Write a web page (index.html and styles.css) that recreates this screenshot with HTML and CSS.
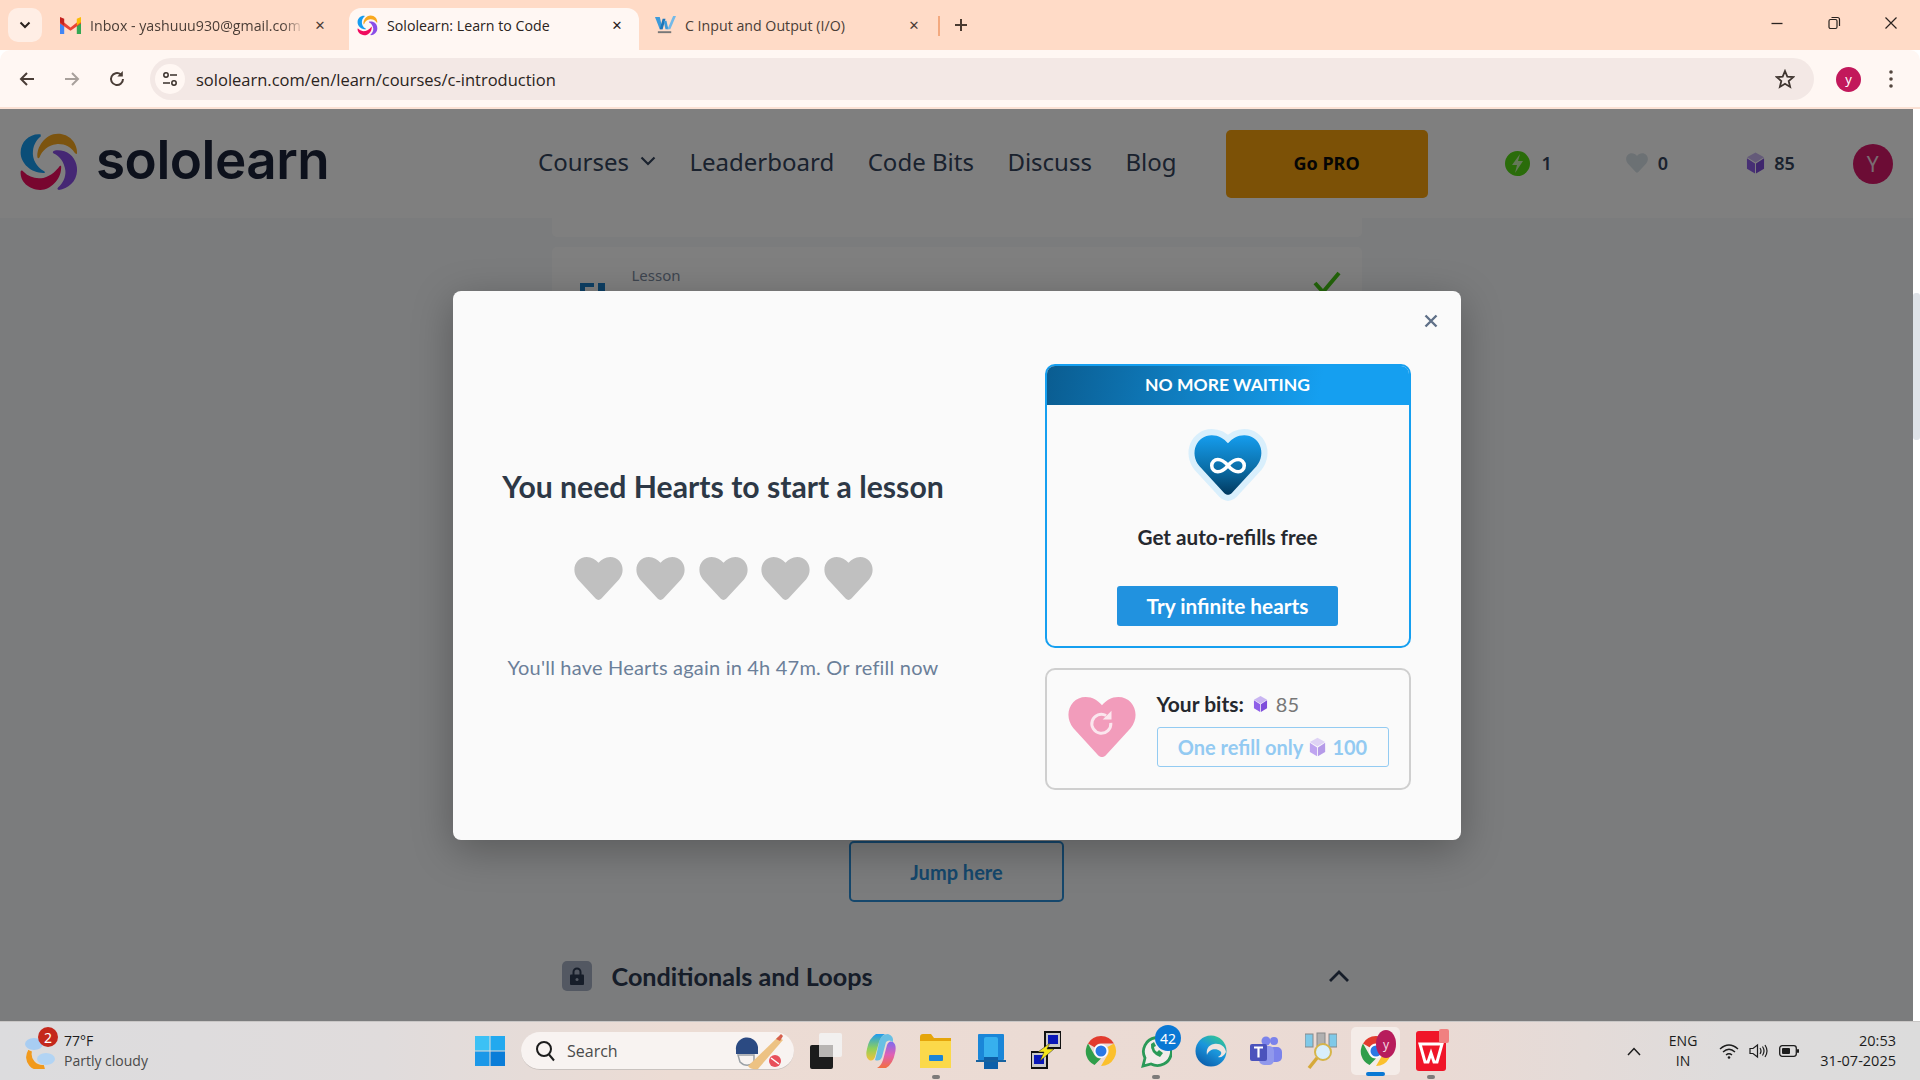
FILE: index.html
```html
<!DOCTYPE html>
<html lang="en">
<head>
<meta charset="utf-8">
<title>Sololearn: Learn to Code</title>
<link rel="stylesheet" href="styles.css">
</head>
<body>
<svg class="defs" width="0" height="0" aria-hidden="true">
  <symbol id="swirl" viewBox="25 38 185 182">
    <path class="sw-a" d="M92 44C60 40 30 65 30 100C30 135 65 165 104 163C106 160 104 158 100 156C80 145 65 120 68 95C70 72 82 58 92 50Z"/>
    <path class="sw-b" d="M82 115C78 85 105 42 145 42C180 42 205 70 204 103C202 106 199 104 196 100C185 82 165 72 140 74C115 76 95 95 88 115C86 118 83 118 82 115Z"/>
    <path class="sw-c" d="M30 158C32 153 36 155 40 160C55 175 75 182 100 178C125 172 140 155 150 142C153 139 156 141 155 146C155 185 120 216 90 215C55 213 28 190 30 158Z"/>
    <path class="sw-d" d="M130 97C135 92 150 92 165 96C190 104 205 130 204 155C203 190 175 212 148 215C143 215 142 211 146 207C160 195 170 175 168 155C165 130 150 110 132 103C129 101 129 99 130 97Z"/>
  </symbol>
  <symbol id="heart" viewBox="0 0 50 44">
    <path d="M25 44C24 44 23 43.500 22 42.500L4 23C-4 13 2 0 13 0C18 0 22 2.500 25 6C28 2.500 32 0 37 0C48 0 54 13 46 23L28 42.500C27 43.500 26 44 25 44Z"/>
  </symbol>
  <symbol id="cube" viewBox="0 0 20 22">
    <path class="cube-top" d="M10 0L19 5L10 10.500L1 5Z"/>
    <path class="cube-left" d="M1 6L9.500 11.500V22L1 17Z"/>
    <path class="cube-right" d="M19 6L10.500 11.500V22L19 17Z"/>
  </symbol>
  <symbol id="chrome" viewBox="0 0 32 32">
    <path fill="#e23b2e" d="M16 1A15 15 0 0 1 29 8.500H16A7.500 7.500 0 0 0 9.500 12.300L3 8.500A15 15 0 0 1 16 1Z"/>
    <path fill="#2f9e4a" d="M3 8.500L9.500 20A7.500 7.500 0 0 0 16 23.500L9.500 30A15 15 0 0 1 3 8.500Z"/>
    <path fill="#fbc02d" d="M29 8.500A15 15 0 0 1 16 31L22.500 20A7.500 7.500 0 0 0 22.500 12Z"/>
    <circle cx="16" cy="16" r="7" fill="#fff"/>
    <circle cx="16" cy="16" r="5.500" fill="#2b78e4"/>
  </symbol>
</svg>

<header class="tabstrip">
  <button class="tab-search"><svg width="12" height="8" viewBox="0 0 12 8"><path d="M1.500 1.500L6 6L10.500 1.500" fill="none" stroke="#2a211d" stroke-width="2"/></svg></button>
  <div class="tab tab-first">
    <svg class="fav" viewBox="0 0 20 16"><path fill="#4285f4" d="M0 3V16H4V7Z"/><path fill="#34a853" d="M20 3V16H16V7Z"/><path fill="#ea4335" d="M0 2L10 10L20 2V6L10 13L0 6Z"/><path fill="#fbbc04" d="M16 1.500L20 0V5L16 8Z"/><path fill="#c5221f" d="M4 1.500L0 0V5L4 8Z"/></svg>
    <span class="tab-title fade">Inbox - yashuuu930@gmail.com</span>
    <span class="tab-x">✕</span>
  </div>
  <div class="tab tab-active">
    <svg class="fav"><use href="#swirl"/></svg>
    <span class="tab-title">Sololearn: Learn to Code</span>
    <span class="tab-x">✕</span>
  </div>
  <div class="tab tab-third">
    <svg class="fav" viewBox="0 0 22 20"><path fill="#3d9ad9" d="M0 1H5L8 14H5Z"/><path fill="#1b75b8" d="M5 14L8 3H11L8 14Z"/><path fill="#3d9ad9" d="M9 5H12L14 14H11Z"/><path fill="#73b9e8" d="M13 14L19 0H22L16 14Z"/><rect x="3" y="16" width="14" height="2" fill="#777"/></svg>
    <span class="tab-title">C Input and Output (I/O)</span>
    <span class="tab-x">✕</span>
  </div>
  <span class="tab-sep"></span>
  <svg class="tab-plus" width="14" height="14" viewBox="0 0 14 14"><path d="M7 1V13M1 7H13" stroke="#4a3a30" stroke-width="2"/></svg>
  <div class="win-ctrls">
    <svg width="14" height="14" viewBox="0 0 14 14"><path d="M1.500 7.500H12.500" stroke="#2a2320" stroke-width="1.300"/></svg>
    <svg width="14" height="14" viewBox="0 0 14 14"><rect x="2" y="3.500" width="8" height="9" rx="1.500" fill="none" stroke="#2a2320" stroke-width="1.200"/><path d="M4.500 1.500H10.500Q12.500 1.500 12.500 3.500V10" fill="none" stroke="#2a2320" stroke-width="1.200"/></svg>
    <svg width="14" height="14" viewBox="0 0 14 14"><path d="M1.500 1.500L12.500 12.500M12.500 1.500L1.500 12.500" stroke="#2a2320" stroke-width="1.200"/></svg>
  </div>
</header>

<div class="toolbar">
  <svg class="tb-btn" viewBox="0 0 18 18"><path d="M16 9H3M9 3L3 9L9 15" fill="none" stroke="#4a3d36" stroke-width="2"/></svg>
  <svg class="tb-btn" viewBox="0 0 18 18"><path d="M2 9H15M9 3L15 9L9 15" fill="none" stroke="#a8a09b" stroke-width="2"/></svg>
  <svg class="tb-btn" viewBox="0 0 18 18"><path d="M15 9A6 6 0 1 1 12.800 4.400" fill="none" stroke="#4a3d36" stroke-width="2"/><path d="M14.800 1V6.500H9.300Z" fill="#4a3d36"/></svg>
  <div class="omnibox">
    <span class="site-info"><svg width="16" height="16" viewBox="0 0 16 16"><circle cx="4" cy="4" r="2.200" fill="none" stroke="#3a302b" stroke-width="1.500"/><path d="M8 4H15M1 12H8" stroke="#3a302b" stroke-width="1.700"/><circle cx="12" cy="12" r="2.200" fill="none" stroke="#3a302b" stroke-width="1.500"/></svg></span>
    <span class="url">sololearn.com/en/learn/courses/c-introduction</span>
    <svg class="star" width="20" height="20" viewBox="0 0 20 20"><path d="M10 2L12.300 7.600L18.300 8.100L13.700 12L15.100 17.900L10 14.700L4.900 17.900L6.300 12L1.700 8.100L7.700 7.600Z" fill="none" stroke="#3f3530" stroke-width="1.800"/></svg>
  </div>
  <span class="profile">y</span>
  <svg class="menu-dots" width="4" height="18" viewBox="0 0 4 18"><circle cx="2" cy="2" r="1.800"/><circle cx="2" cy="9" r="1.800"/><circle cx="2" cy="16" r="1.800"/></svg>
</div>

<div class="browser-body">
  <div class="viewport">
    <nav class="site-header">
      <a class="brand"><svg class="brand-mark"><use href="#swirl"/></svg><span class="brand-name">sololearn</span></a>
      <div class="nav-links">
        <span class="nav-link">Courses <svg width="16" height="10" viewBox="0 0 16 10"><path d="M1.500 1.500L8 8L14.500 1.500" fill="none" stroke="#34445c" stroke-width="2.200"/></svg></span>
        <span class="nav-link">Leaderboard</span>
        <span class="nav-link">Code Bits</span>
        <span class="nav-link">Discuss</span>
        <span class="nav-link">Blog</span>
      </div>
      <span class="go-pro">Go PRO</span>
      <span class="stat stat-energy"><svg width="25" height="25" viewBox="0 0 25 25"><ellipse cx="12.500" cy="12.500" rx="12.500" ry="12.500" fill="#54d814"/><path d="M15 3L7 14H12L10 22L18 10H13Z" fill="#c8f0b0"/></svg>1</span>
      <span class="stat stat-heart"><svg class="heart-dim" width="22" height="20"><use href="#heart"/></svg>0</span>
      <span class="stat stat-gem"><svg width="19" height="22"><use href="#cube"/></svg>85</span>
      <span class="avatar">Y</span>
    </nav>
    <main class="course">
      <div class="lessons">
        <div class="lesson-card lesson-stub"></div>
        <div class="lesson-card">
          <svg class="lesson-icon" width="25" height="30" viewBox="0 0 25 30"><path fill="#1a7fc8" d="M0 0H14V4H5V30H0ZM18 0H25V30H18Z"/></svg>
          <span class="lesson-label">Lesson</span>
          <svg class="lesson-check" width="28" height="24" viewBox="0 0 28 24"><path d="M2 12L10 21L26 2" fill="none" stroke="#46c814" stroke-width="4"/></svg>
        </div>
      </div>
      <span class="jump">Jump here</span>
      <div class="module-row">
        <span class="lock"><svg width="14" height="18" viewBox="0 0 14 18"><path d="M3.500 8V5A3.500 3.500 0 0 1 10.500 5V8" fill="none" stroke="#2d3a52" stroke-width="2"/><rect y="7.500" width="14" height="10.500" rx="1" fill="#2d3a52"/><circle cx="7" cy="12.500" r="1.500" fill="#a6b0c4"/></svg></span>
        <span class="module-title">Conditionals and Loops</span>
        <svg class="module-chevron" width="22" height="14" viewBox="0 0 22 14"><path d="M2 12L11 3L20 12" fill="none" stroke="#2d3a52" stroke-width="2.800"/></svg>
      </div>
    </main>
    <div class="overlay">
      <section class="modal">
        <svg class="modal-close" width="14" height="14" viewBox="0 0 14 14"><path d="M1.500 1.500L12.500 12.500M12.500 1.500L1.500 12.500" stroke="#5f7088" stroke-width="2.400"/></svg>
        <div class="need">
          <h1 class="need-title">You need Hearts to start a lesson</h1>
          <div class="hearts">
            <svg class="grey-heart"><use href="#heart"/></svg>
            <svg class="grey-heart"><use href="#heart"/></svg>
            <svg class="grey-heart"><use href="#heart"/></svg>
            <svg class="grey-heart"><use href="#heart"/></svg>
            <svg class="grey-heart"><use href="#heart"/></svg>
          </div>
          <p class="need-sub">You'll have Hearts again in 4h 47m. Or refill now</p>
        </div>
        <div class="offers">
          <div class="promo">
            <div class="promo-head">NO MORE WAITING</div>
            <div class="promo-body">
              <svg class="promo-heart" width="84" height="76" viewBox="-6 -6 62 56">
                <defs><linearGradient id="hg" x1="0" y1="0" x2="0" y2="1"><stop offset="0" stop-color="#159dee"/><stop offset=".55" stop-color="#0b6fa9"/><stop offset="1" stop-color="#01395f"/></linearGradient></defs>
                <path fill="#fff" stroke="#d9effc" stroke-width="9" stroke-linejoin="round" d="M25 44C24 44 23 43.500 22 42.500L4 23C-4 13 2 0 13 0C18 0 22 2.500 25 6C28 2.500 32 0 37 0C48 0 54 13 46 23L28 42.500C27 43.500 26 44 25 44Z"/>
                <path fill="url(#hg)" d="M25 44C24 44 23 43.500 22 42.500L4 23C-4 13 2 0 13 0C18 0 22 2.500 25 6C28 2.500 32 0 37 0C48 0 54 13 46 23L28 42.500C27 43.500 26 44 25 44Z"/>
                <path fill="none" stroke="#fff" stroke-width="2.600" d="M25 22.500C22 19 19.500 18 17.500 18C15 18 13 20 13 22.500C13 25 15 27 17.500 27C19.500 27 22 26 25 22.500C28 19 30.500 18 32.500 18C35 18 37 20 37 22.500C37 25 35 27 32.500 27C30.500 27 28 26 25 22.500Z"/>
              </svg>
              <div class="promo-text">Get auto-refills free</div>
              <span class="promo-btn">Try infinite hearts</span>
            </div>
          </div>
          <div class="refill">
            <svg class="refill-heart" width="68" height="60" viewBox="0 0 50 44">
              <use href="#heart"/>
              <path d="M31.500 19A7 7 0 1 1 28 13.500" fill="none" stroke="#fbe6ee" stroke-width="2.200"/>
              <path d="M32 10V16.500H25.500Z" fill="#fbe6ee"/>
            </svg>
            <div class="refill-main">
              <div class="bits"><b class="bits-label">Your bits:</b><svg width="15" height="16"><use href="#cube"/></svg><span class="bits-num">85</span></div>
              <span class="refill-btn">One refill only <svg class="faded-cube" width="17" height="20"><use href="#cube"/></svg> 100</span>
            </div>
          </div>
        </div>
      </section>
    </div>
  </div>
  <div class="scrollbar"><span class="scroll-thumb"></span></div>
</div>

<footer class="taskbar">
  <div class="weather">
    <svg class="weather-icon" width="34" height="36" viewBox="0 0 34 36">
      <path d="M6 18A13 13 0 0 0 20 34A11 11 0 0 1 6 18Z" fill="#f19a1d" stroke="#f19a1d" stroke-width="4"/>
      <ellipse cx="10" cy="11" rx="9" ry="6" fill="#a8cdf2"/>
      <ellipse cx="22" cy="26" rx="9" ry="6" fill="#b2d4f4"/>
    </svg>
    <span class="weather-badge">2</span>
    <div class="weather-text"><span class="temp">77°F</span><span class="cond">Partly cloudy</span></div>
  </div>
  <svg class="start" width="30" height="30" viewBox="0 0 30 30"><rect width="14.500" height="14.500" fill="#3cc1f5"/><rect x="15.500" width="14.500" height="14.500" fill="#22a9ef"/><rect y="15.500" width="14.500" height="14.500" fill="#1b98e8"/><rect x="15.500" y="15.500" width="14.500" height="14.500" fill="#0a7dd8"/></svg>
  <div class="search-pill">
    <svg width="20" height="22" viewBox="0 0 20 22"><circle cx="9" cy="9" r="7" fill="none" stroke="#1c1c1c" stroke-width="2"/><path d="M14 14.500L19 20.500" stroke="#1c1c1c" stroke-width="2"/></svg>
    <span class="search-word">Search</span>
    <svg class="search-art" width="50" height="38" viewBox="0 0 50 38">
      <path d="M2 18A11 11 0 0 1 24 15V22H2Z" fill="#2b4a82"/>
      <path d="M4 23H20V31Q12 36 6 30Z" fill="none" stroke="#9aa0a6" stroke-width="1.500"/>
      <path d="M14 34L44 5L49 8L24 37Q17 38 14 34Z" fill="#edc283"/>
      <path d="M42 7L47 2L49 4L46 9Z" fill="#d6604d"/>
      <circle cx="41" cy="29" r="6" fill="#e8505b"/>
      <path d="M37 26L45 32" stroke="#fff" stroke-width="1.500"/>
    </svg>
  </div>
  <div class="dock">
    <span class="dock-item"><svg width="32" height="36" viewBox="0 0 32 36"><rect y="12" width="23" height="24" rx="2" fill="#1c1c1c"/><rect x="9" y="0" width="23" height="24" rx="2" fill="#f2f0ef"/><rect x="9" y="12" width="14" height="12" fill="#b8b5b3"/></svg></span>
    <span class="dock-item"><svg width="30" height="36" viewBox="0 0 30 36"><defs><linearGradient id="cp" x1="0" y1="0" x2="0" y2="1"><stop offset="0" stop-color="#1f9bf0"/><stop offset=".55" stop-color="#8fd05a"/><stop offset="1" stop-color="#f3c13a"/></linearGradient><linearGradient id="cp2" x1="0" y1="0" x2="0" y2="1"><stop offset="0" stop-color="#7b6cf0"/><stop offset=".5" stop-color="#e05fb5"/><stop offset="1" stop-color="#f2703f"/></linearGradient></defs><path d="M10 1H19Q15 3 13 9L9 24Q7 29 3 27Q-1 24 1 16Q3 5 10 1Z" fill="url(#cp)"/><path d="M20 35H11Q15 33 17 27L21 12Q23 7 27 9Q31 12 29 20Q27 31 20 35Z" fill="url(#cp2)"/><path d="M13 9Q15 1 22 1Q28 3 27 9Q23 6 20 9L16 24Q14 29 9 27Q11 20 13 9Z" fill="#3db5e8" opacity=".75"/></svg></span>
    <span class="dock-item has-dot"><svg width="31" height="36" viewBox="0 0 31 36"><path d="M0 4Q0 1 3 1H11L14 5H31V33H0Z" fill="#e5a50a"/><rect y="8" width="31" height="27" fill="#fbd94a"/><rect x="9" y="22" width="14" height="6" rx="1" fill="#1b85d6"/></svg></span>
    <span class="dock-item"><svg width="30" height="36" viewBox="0 0 30 36"><rect x="2" y="1" width="26" height="26" rx="1" fill="#1a86d8"/><rect x="8" y="4" width="14" height="32" rx="2" fill="#37b0ee"/><rect x="8" y="24" width="14" height="12" fill="#0d5fa8"/><rect y="27" width="30" height="2" fill="#17629f"/></svg></span>
    <span class="dock-item"><svg width="30" height="40" viewBox="0 0 30 40"><rect x="14" y="1" width="16" height="16" fill="#c9c9c9" stroke="#111" stroke-width="2"/><rect x="17" y="4" width="10" height="9" fill="#0a18b8"/><rect x="0" y="21" width="16" height="16" fill="#c9c9c9" stroke="#111" stroke-width="2"/><rect x="3" y="24" width="10" height="9" fill="#0a18b8"/><path d="M19 12L7 21L13 21L9 30L23 18L16 18Z" fill="#f5e61a" stroke="#222" stroke-width=".5"/></svg></span>
    <span class="dock-item"><svg width="32" height="36" viewBox="0 0 32 32"><use href="#chrome"/></svg></span>
    <span class="dock-item has-dot">
      <svg width="32" height="36" viewBox="0 0 32 36"><path d="M3 33L5 25A14 14 0 1 1 11 31Z" fill="#f3ecea" stroke="#2a9a58" stroke-width="2.800"/><path d="M11 11Q10 20 20 24L23 20L19 17L17 19Q14 17 14 14L16 13L14 9Z" fill="#2a9a58"/></svg>
      <span class="dock-badge">42</span>
    </span>
    <span class="dock-item"><svg width="32" height="36" viewBox="0 0 32 32"><defs><linearGradient id="ed" x1=".8" y1="0" x2=".2" y2="1"><stop offset="0" stop-color="#35c88f"/><stop offset=".45" stop-color="#1a96dc"/><stop offset="1" stop-color="#0b5aa8"/></linearGradient></defs><circle cx="16" cy="16" r="15.500" fill="url(#ed)"/><path d="M31 17C30 11 25 8 19 9C13 10 11 15 12 20C14 14 21 13 25 16C28 18 25 21 23 22C26 23 29 21 31 17Z" fill="#f0e4df"/></svg></span>
    <span class="dock-item"><svg width="32" height="32" viewBox="0 0 32 32"><circle cx="24" cy="6" r="4" fill="#7b83eb"/><circle cx="16" cy="6" r="4.500" fill="#7b83eb"/><rect x="19" y="12" width="13" height="15" rx="5" fill="#7b83eb"/><rect x="9" y="11" width="15" height="19" rx="5" fill="#9098ec"/><rect y="9" width="17" height="17" rx="2" fill="#4b53bc"/><path d="M4 12.500H13M8.500 12.500V22.500" stroke="#fff" stroke-width="2.200"/></svg></span>
    <span class="dock-item"><svg width="32" height="38" viewBox="0 0 32 38"><rect x="0" y="2" width="8" height="13" fill="#7fc9e8" stroke="#888"/><rect x="12" y="1" width="8" height="13" fill="#b0b0b0" stroke="#888"/><rect x="24" y="2" width="8" height="13" fill="#7fc9e8" stroke="#888"/><circle cx="18" cy="20" r="8" fill="#d8eefb" stroke="#d6b54a" stroke-width="2"/><path d="M12 26L4 36" stroke="#d6a93a" stroke-width="3.500"/></svg></span>
    <span class="dock-item dock-active">
      <svg width="32" height="36" viewBox="0 0 32 32"><use href="#chrome"/></svg>
      <span class="chrome-y">y</span>
      <span class="active-bar"></span>
    </span>
    <span class="dock-item has-dot">
      <svg width="30" height="40" viewBox="0 0 30 40"><rect width="30" height="40" rx="3" fill="#f01528"/><path d="M4 13H26L21 31H18L15 22L12 31H9Z" fill="none" stroke="#fff" stroke-width="3"/></svg>
      <span class="wps-tag"></span>
    </span>
  </div>
  <div class="tray">
    <svg width="14" height="9" viewBox="0 0 14 9"><path d="M1 8L7 1.500L13 8" fill="none" stroke="#1c1c1c" stroke-width="1.500"/></svg>
    <div class="lang"><span>ENG</span><span>IN</span></div>
    <svg class="tray-wifi" width="20" height="16" viewBox="0 0 20 16"><path d="M1 6Q10 -2 19 6M4 9Q10 3.500 16 9M7 12Q10 9.500 13 12" fill="none" stroke="#1c1c1c" stroke-width="1.400"/><circle cx="10" cy="14.500" r="1.300" fill="#1c1c1c"/></svg>
    <svg class="tray-vol" width="20" height="16" viewBox="0 0 20 16"><path d="M1 5.500H4L8.500 2V14L4 10.500H1Z" fill="none" stroke="#1c1c1c" stroke-width="1.200"/><path d="M11 5Q13 8 11 11M13.500 3.500Q16.500 8 13.500 12.500M16 2Q20 8 16 14" fill="none" stroke="#1c1c1c" stroke-width="1.200"/></svg>
    <svg class="tray-bat" width="20" height="12" viewBox="0 0 20 12"><rect x=".7" y=".7" width="16.600" height="10.600" rx="2.500" fill="none" stroke="#1c1c1c" stroke-width="1.300"/><rect x="3" y="3" width="8" height="6" rx="1" fill="#1c1c1c"/><rect x="18" y="4" width="2" height="4" rx="1" fill="#1c1c1c"/></svg>
    <div class="clock"><span>20:53</span><span>31-07-2025</span></div>
  </div>
</footer>
</body>
</html>
```

FILE: styles.css
```css
* { box-sizing: border-box; }
html, body { margin: 0; height: 100%; }
body { width: 1920px; height: 1080px; overflow: hidden; display: flex; flex-direction: column; font-family: "Noto Sans", sans-serif; background: #fff; }
.defs { position: absolute; }
.sw-a { fill: #169cf0; }
.sw-b { fill: #f9a81e; }
.sw-c { fill: #f00c5e; }
.sw-d { fill: #8a4ee8; }
.cube-top { fill: #c9b5f2; }
.cube-left { fill: #8f5fe8; }
.cube-right { fill: #7e4ddb; }

/* browser tabs */
.tabstrip { height: 50px; flex: none; background: #ffdbc7; display: flex; align-items: flex-end; padding-left: 8px; position: relative; }
.tab-search { width: 34px; height: 34px; margin-bottom: 8px; border: 0; border-radius: 10px; background: #ffeee5; display: flex; align-items: center; justify-content: center; padding: 0; }
.tab { width: 297px; height: 42px; display: flex; align-items: center; padding: 0 14px 8px 8px; font-size: 14.200px; font-family: "Open Sans", sans-serif; color: #4a3d36; }
.tab-first { margin-left: 10px; padding-right: 21px; }
.tab-third { padding-left: 13px; padding-right: 17px; }
.tab-active { background: #fff7f3; border-radius: 12px 12px 0 0; color: #2a2320; padding-bottom: 8px; width: 290px; margin: 0 3px 0 0; }
.fav { width: 21px; height: 21px; flex: none; margin-right: 9px; }
.tab-title { flex: 1; white-space: nowrap; overflow: hidden; }
.fade { -webkit-mask-image: linear-gradient(to right, #000 90%, transparent); mask-image: linear-gradient(to right, #000 90%, transparent); }
.tab-x { font-size: 13px; width: 16px; text-align: center; margin-left: 8px; font-family: "DejaVu Sans", sans-serif; }
.tab-sep { width: 2px; height: 20px; background: #f3a97f; margin: 0 0 14px -1px; }
.tab-plus { margin: 0 0 18px 14px; }
.win-ctrls { display: flex; gap: 43px; margin: 0 22px 20px auto; }

/* browser toolbar */
.toolbar { height: 59px; flex: none; background: #fff7f3; border-bottom: 2px solid #fbe1d4; border-radius: 10px 10px 0 0; margin-top: 0; display: flex; align-items: center; padding: 1px 0 0 18px; }
.tb-btn { width: 18px; height: 18px; flex: none; margin-right: 27px; }
.omnibox { width: 1664px; height: 42px; margin-left: -3px; background: #f3e8e5; border-radius: 21px; display: flex; align-items: center; padding: 0 5px; }
.site-info { width: 30px; height: 30px; border-radius: 50%; background: #fff7f3; display: flex; align-items: center; justify-content: center; flex: none; }
.url { font-size: 16.500px; color: #2a2320; margin-left: 11px; flex: 1; font-family: "Open Sans", sans-serif; }
.star { margin-right: 14px; }
.profile { width: 25px; height: 25px; border-radius: 50%; background: #c2185b; color: #fff; font-size: 13px; display: flex; align-items: center; justify-content: center; margin-left: 22px; line-height: 1; }
.menu-dots { margin-left: 28px; fill: #54473f; }

/* page */
.browser-body { flex: 1; display: flex; min-height: 0; }
.viewport { flex: 1; position: relative; display: flex; flex-direction: column; min-width: 0; background: #f6f8fa; overflow: hidden; }
.scrollbar { width: 7px; flex: none; background: #fff; padding-top: 184px; }
.scroll-thumb { display: block; height: 147px; background: #dfe3e8; border-radius: 3px; }
.site-header { height: 109px; flex: none; background: #fff; display: flex; align-items: center; padding: 0 20px 0 19px; }
.brand { display: flex; align-items: center; gap: 17px; width: 519px; }
.brand-mark { width: 60px; height: 60px; flex: none; margin-bottom: 4px; }
.brand-name { font-family: "Inter", sans-serif; font-weight: 600; font-size: 53px; letter-spacing: -.5px; color: #1a2238; line-height: 1; padding-bottom: 6px; }
.nav-links { display: flex; gap: 33.500px; font-size: 24px; color: #34445c; padding-bottom: 5px; }
.nav-link { display: flex; align-items: center; gap: 11px; }
.go-pro { width: 202px; height: 68px; margin-left: 49px; border-radius: 5px; background: #f8a20c; display: flex; align-items: center; justify-content: center; font-weight: 700; font-size: 18px; color: #0a0a0a; padding-bottom: 1px; }
.stat { display: flex; align-items: center; gap: 12px; font-size: 18px; font-weight: 600; color: #34445c; padding-bottom: 1px; }
.stat-energy { margin-left: 77px; }
.stat-heart { margin-left: 74px; gap: 10px; }
.stat-gem { margin-left: 78px; gap: 9px; }
.heart-dim { fill: #d8e2e8; }
.avatar { width: 40px; height: 40px; border-radius: 50%; margin-left: 58px; background: #d9186a; color: #f4d9e4; display: flex; align-items: center; justify-content: center; font-size: 21px; }

.course { flex: 1; display: flex; flex-direction: column; align-items: center; }
.lessons { width: 810px; height: 623px; display: flex; flex-direction: column; gap: 10px; }
.lesson-card { height: 130px; background: #fff; border-radius: 5px; position: relative; flex: none; padding: 17px 0 0 80px; }
.lesson-stub { height: 19px; border-radius: 0 0 5px 5px; padding: 0; }
.lesson-label { font-size: 15px; line-height: 18px; color: #7c8b9f; }
.lesson-icon { position: absolute; left: 28px; top: 36px; }
.lesson-check { position: absolute; right: 21px; top: 24px; }
.jump { width: 215px; height: 61px; border: 2px solid #2b8fd8; border-radius: 5px; color: #2b8fd8; font-family: "Lato", sans-serif; font-weight: 700; font-size: 20px; display: flex; align-items: center; justify-content: center; flex: none; }
.module-row { width: 810px; margin-top: 59px; display: flex; align-items: center; padding: 0 12px 0 10px; flex: none; }
.lock { width: 30px; height: 30px; border-radius: 5px; background: #a6b0c4; display: flex; align-items: center; justify-content: center; }
.module-title { margin-left: 20px; font-family: "Lato", sans-serif; font-size: 25.200px; font-weight: 700; color: #2d3a52; flex: 1; }

/* modal */
.overlay { position: absolute; inset: 0; background: rgba(0,0,0,.5); display: flex; align-items: center; justify-content: center; }
.modal { position: relative; width: 1008px; height: 549px; background: #fafafa; border-radius: 8px; padding: 73px 50px 50px; display: flex; align-items: center; justify-content: space-between; box-shadow: 0 10px 40px rgba(0,0,0,.28); font-family: "Lato", sans-serif; }
.modal-close { position: absolute; top: 23px; right: 23px; }
.need { width: 441px; display: flex; flex-direction: column; align-items: center; padding-bottom: 7px; }
.need-title { margin: 0; font-size: 30.200px; font-weight: 700; color: #2d3846; white-space: nowrap; line-height: 40px; }
.hearts { display: flex; gap: 13.500px; margin-top: 51px; }
.grey-heart { width: 49px; height: 43px; fill: #c0c0c0; }
.need-sub { margin: 54px 0 0; font-size: 20px; letter-spacing: .2px; line-height: 26px; color: #6b7f99; white-space: nowrap; }
.offers { width: 366px; display: flex; flex-direction: column; gap: 20px; }
.promo { height: 284px; border-radius: 10px; border: 2px solid #159ff0; display: flex; flex-direction: column; overflow: hidden; }
.promo-head { height: 41px; margin: -2px -2px 0; background: linear-gradient(100deg, #0a5c90, #159ff0 75%); color: #fff; font-weight: 700; font-size: 17.500px; display: flex; align-items: center; justify-content: center; flex: none; }
.promo-body { flex: 1; display: flex; flex-direction: column; align-items: center; }
.promo-heart { margin-top: 22px; }
.promo-text { margin-top: 21px; font-size: 20.700px; font-weight: 700; color: #25282e; line-height: 26px; }
.promo-btn { margin-top: 36px; width: 221px; height: 40px; border-radius: 3px; background: #2192df; color: #fff; font-size: 20.800px; font-weight: 700; display: flex; align-items: center; justify-content: center; }
.refill { height: 122px; border: 2px solid #cfcfcf; border-radius: 10px; display: flex; align-items: center; padding: 0 20px 0 21px; }
.refill-heart { fill: #f29cbb; flex: none; margin-bottom: 3px; }
.refill-main { margin-left: 21px; flex: 1; display: flex; flex-direction: column; }
.bits { display: flex; align-items: center; gap: 7px; font-size: 21px; height: 26px; color: #25282e; }
.bits-label { font-weight: 700; margin-right: 2px; }
.bits-num { color: #777; margin-left: 1px; font-size: 20px; }
.refill-btn { margin-top: 10px; height: 40px; border: 1px solid #93cbf2; border-radius: 3px; color: #93caf2; font-weight: 700; font-size: 20px; display: flex; align-items: center; justify-content: center; gap: 6px; }
.faded-cube { opacity: .55; }

/* taskbar */
.taskbar { height: 59px; flex: none; border-top: 1px solid #c9c7c6; background: linear-gradient(90deg, #dcdcde 0%, #e0dcdc 20%, #ecdcd4 35%, #eadad4 75%, #dedcdc 90%, #dcdcdc 100%); display: flex; align-items: center; position: relative; }
.weather { width: 475px; display: flex; align-items: center; padding-left: 24px; position: relative; }
.weather-badge { position: absolute; left: 38px; top: -4px; width: 20px; height: 20px; border-radius: 50%; background: #c4281c; color: #fff; font-size: 14px; display: flex; align-items: center; justify-content: center; }
.weather-text { display: flex; flex-direction: column; margin-left: 6px; font-size: 14px; line-height: 20px; font-family: "Open Sans", sans-serif; }
.temp { color: #1c1c1c; }
.cond { color: #4a4a4a; }
.search-pill { width: 273px; height: 38px; margin-left: 16px; border-radius: 19px; background: #f8f3f1; border-bottom: 1px solid #c9c2bf; display: flex; align-items: center; padding: 0 10px 0 14px; }
.search-word { font-size: 16px; color: #4a4a4a; margin-left: 12px; flex: 1; font-family: "Open Sans", sans-serif; }
.dock { display: flex; align-items: center; margin-left: 4px; }
.dock-item { width: 55px; height: 48px; position: relative; display: flex; align-items: center; justify-content: center; flex: none; }
.has-dot::after { content: ""; position: absolute; left: 24px; bottom: -4px; width: 8px; height: 4px; border-radius: 2px; background: #7d7b7a; }
.dock-badge { position: absolute; left: 27px; top: -2px; width: 26px; height: 26px; border-radius: 50%; background: #0a78d4; color: #fff; font-size: 14px; display: flex; align-items: center; justify-content: center; }
.dock-active { background: #f4ece8; border-radius: 5px; width: 49px; margin: 0 3px; }
.chrome-y { position: absolute; left: 25px; top: 3px; width: 20px; height: 28px; border-radius: 50%; background: #b71c5c; color: #f5d5e2; font-size: 12px; display: flex; align-items: center; justify-content: center; }
.active-bar { position: absolute; left: 15px; bottom: -1px; width: 19px; height: 4px; border-radius: 2px; background: #0a78d4; }
.wps-tag { position: absolute; right: 9px; top: 2px; width: 10px; height: 14px; border-radius: 2px; background: #f08080; }
.tray { margin-left: auto; display: flex; align-items: center; padding-right: 24px; color: #1c1c1c; font-family: "Open Sans", sans-serif; font-size: 14px; }
.lang { display: flex; flex-direction: column; align-items: center; line-height: 20px; margin: 0 22px 0 27.500px; }
.tray-wifi { margin-right: 10px; }
.tray-vol { margin-right: 10px; }
.clock { display: flex; flex-direction: column; align-items: flex-end; line-height: 20px; margin-left: 21px; font-size: 14.500px; }
```
